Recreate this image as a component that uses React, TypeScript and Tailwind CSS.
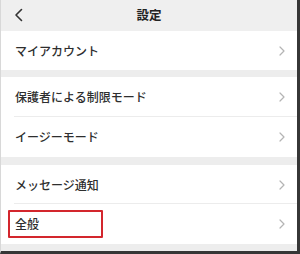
import React from "react";

const Chevron = () => (
  <svg width="6" height="10" viewBox="0 0 6 10" className="shrink-0">
    <path d="M1 1 L5 5 L1 9" fill="none" stroke="#b4b4b4" strokeWidth="1.2" strokeLinecap="round" strokeLinejoin="round" />
  </svg>
);

const Row = ({ label, h, divider, highlight }: { label: string; h: string; divider?: boolean; highlight?: boolean }) => (
  <div className={`relative flex items-center justify-between bg-white pl-[14px] pr-[12px] ${h}`}>
    <span className="text-[12px] text-[#2e2e2e] font-medium">{label}</span>
    <Chevron />
    {divider && <div className="absolute bottom-0 left-[13px] right-0 h-px bg-[#ececec]" />}
    {highlight && (
      <div className="absolute left-[7px] top-[6px] w-[95px] h-[28px] border-2 border-[#d3262d] rounded-[1px]" />
    )}
  </div>
);

export default function App() {
  return (
    <div
      className="w-[300px] h-[254px] bg-[#ededed] border-r-[3px] border-b-[3px] border-[#363636] border-l border-l-[#d8d8d8] flex flex-col overflow-hidden"
      style={{ fontFamily: '"Noto Sans CJK JP", "Noto Sans", sans-serif' }}
    >
      <div className="h-[31px] shrink-0 relative flex items-center justify-center bg-[#efefef]">
        <svg width="10" height="14" viewBox="0 0 10 14" className="absolute left-[13px] top-[8px]">
          <path d="M7.5 1.5 L2 7 L7.5 12.5" fill="none" stroke="#333" strokeWidth="1.6" strokeLinecap="round" strokeLinejoin="round" />
        </svg>
        <span className="text-[12.5px] font-bold text-[#222]">設定</span>
      </div>
      <Row label="マイアカウント" h="h-[39px]" />
      <div className="h-[7px] shrink-0" />
      <Row label="保護者による制限モード" h="h-[40px]" divider />
      <Row label="イージーモード" h="h-[40px]" />
      <div className="h-[8px] shrink-0" />
      <Row label="メッセージ通知" h="h-[39px]" divider />
      <Row label="全般" h="h-[40px]" highlight />
    </div>
  );
}
